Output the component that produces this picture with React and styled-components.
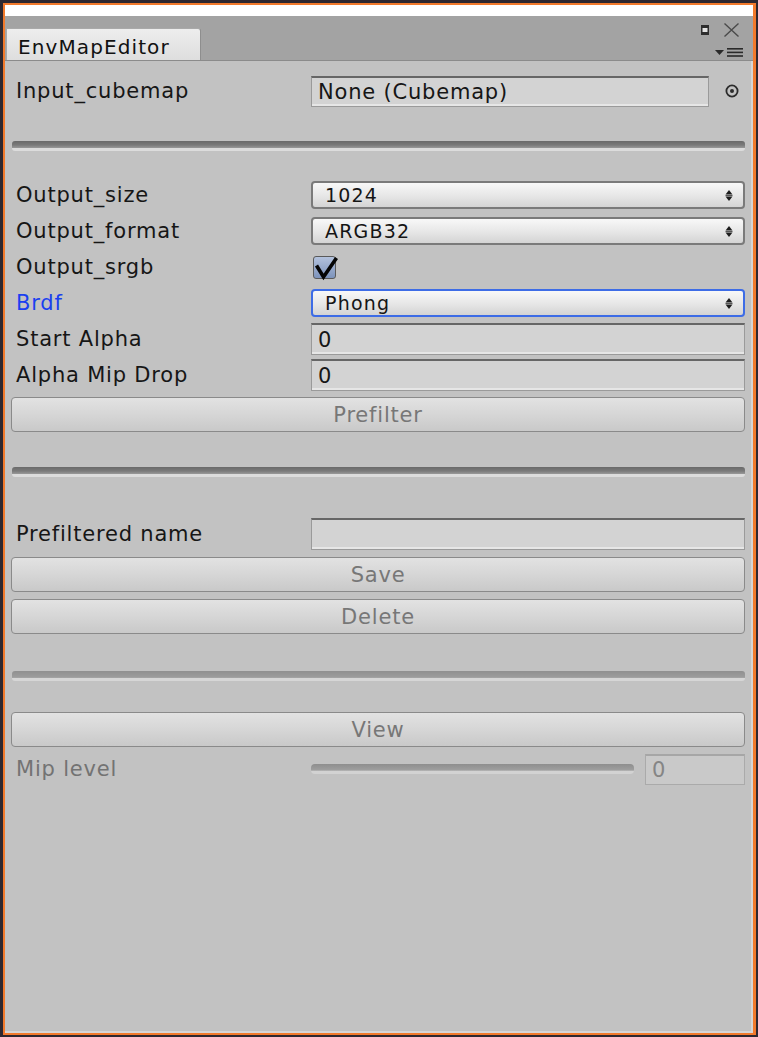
import React from 'react'
import styled, { createGlobalStyle } from 'styled-components'

const Global = createGlobalStyle`
  html, body {
    margin: 0;
    padding: 0;
    background: #2e2830;
  }
  body {
    font-family: "DejaVu Sans", "Liberation Sans", sans-serif;
  }
`

const Window = styled.div`
  margin: 3px 0 0 3px;
  width: 753px;
  height: 1032px;
  box-sizing: border-box;
  border: 2px solid #f27a2c;
  border-right-width: 3px;
  background: #c2c2c2;
  display: flex;
  flex-direction: column;
`

const TitleStrip = styled.div`
  height: 11px;
  background: #ffffff;
`

const TabBar = styled.div`
  height: 44px;
  background: #a3a3a3;
  border-bottom: 1px solid #8b8b8b;
  display: flex;
  align-items: flex-end;
`

const Tab = styled.div`
  margin-left: 1px;
  width: 195px;
  height: 32px;
  box-sizing: border-box;
  padding: 4px 0 0 11px;
  line-height: 28px;
  background: linear-gradient(#ededed, #dedede);
  border: 1px solid #a9a9a9;
  border-right-color: #8e8e8e;
  border-bottom: none;
  border-top-right-radius: 3px;
  font-size: 20px;
  letter-spacing: 1.1px;
  color: #111;
`

const WinControls = styled.div`
  margin-left: auto;
  align-self: stretch;
  display: flex;
  flex-direction: column;
  align-items: flex-end;
  padding: 6px 10px 0 0;
`

const TopIcons = styled.div`
  display: flex;
  align-items: center;
  gap: 14px;
  margin-right: 3px;
  height: 16px;
`

const MenuIcon = styled.div`
  margin-top: 10px;
  display: flex;
  align-items: center;
  gap: 3px;
`

const Content = styled.div`
  flex: 1;
  padding: 12px 6px 0 6px;
  border-right: 2px solid #d6d6d6;
  border-bottom: 2px solid #d6d6d6;
  display: flex;
  flex-direction: column;
`

const Row = styled.div`
  display: grid;
  grid-template-columns: 300px 1fr;
  align-items: center;
  height: 36px;
  margin-top: ${p => p.$mt || 0}px;
`

const Label = styled.div`
  padding-left: 5px;
  font-size: 21px;
  letter-spacing: 0.8px;
  color: ${p => p.$color || '#161616'};
  white-space: nowrap;
`

const Field = styled.div`
  height: ${p => p.$h || 32}px;
  width: ${p => (p.$w ? `${p.$w}px` : 'auto')};
  box-sizing: border-box;
  padding-left: 6px;
  background: ${p => (p.$disabled ? '#c9c9c9' : '#d3d3d3')};
  border: 1px solid ${p => (p.$disabled ? '#aaaaaa' : '#9a9a9a')};
  border-top: 2px solid ${p => (p.$disabled ? '#a6a6a6' : '#666666')};
  box-shadow: ${p => (p.$disabled ? 'none' : 'inset 0 -2px 0 #e6e6e6')};
  display: flex;
  align-items: center;
  font-size: 21px;
  letter-spacing: 0.8px;
  color: ${p => (p.$disabled ? '#858585' : '#161616')};
`

const PickerRow = styled.div`
  display: flex;
  align-items: center;
  gap: 16px;
`

const Dropdown = styled.div`
  height: 28px;
  box-sizing: border-box;
  padding: 0 10px 0 12px;
  border-radius: 4px;
  border: ${p => (p.$focus ? '2px solid #3d6ce6' : '2px solid #7a7a7a')};
  background: linear-gradient(#f8f8f8, #e6e6e6 55%, #d4d4d4);
  display: flex;
  align-items: center;
  justify-content: space-between;
  font-size: 19px;
  letter-spacing: 1.2px;
  color: #151515;
`

const CheckBox = styled.div`
  position: relative;
  margin-left: 2px;
  width: 23px;
  height: 23px;
  box-sizing: border-box;
  border: 1px solid #5a5a5a;
  border-radius: 3px;
  background: linear-gradient(#b3c2dd, #7d93bb);
`

const CheckMark = styled.svg`
  position: absolute;
  left: 1px;
  top: 0;
  overflow: visible;
`

const Separator = styled.div`
  height: 10px;
  margin: ${p => p.$mt}px 0 0 1px;
  border-radius: 3px;
  background: ${p =>
    p.$faint
      ? 'linear-gradient(#909090, #9b9b9b 55%, #a6a6a6 70%, #d6d6d6 72%, #d6d6d6)'
      : 'linear-gradient(#6a6a6a, #7a7a7a 40%, #999999 70%, #dcdcdc 72%, #dcdcdc)'};
`

const Button = styled.div`
  height: 35px;
  margin-top: ${p => p.$mt || 0}px;
  box-sizing: border-box;
  border: 1px solid #8a8a8a;
  border-radius: 4px;
  background: linear-gradient(#e2e2e2, #d6d6d6 50%, #c9c9c9);
  display: flex;
  align-items: center;
  justify-content: center;
  font-size: 21px;
  letter-spacing: 0.8px;
  color: #777777;
`

const SliderRow = styled.div`
  display: flex;
  align-items: center;
  gap: 11px;
`

const Track = styled.div`
  width: 323px;
  height: 10px;
  border-radius: 4px;
  background: linear-gradient(#8e8e8e, #9e9e9e 60%, #d2d2d2 75%, #d2d2d2);
`

const ArrowIcon = () => (
  <svg width="8" height="13" viewBox="0 0 8 13">
    <path d="M0.5 5.5 L4 1 L7.5 5.5 Z" fill="#1c1c1c" />
    <rect x="0.5" y="6" width="7" height="1" fill="#555" />
    <path d="M0.5 7.5 L4 12 L7.5 7.5 Z" fill="#1c1c1c" />
  </svg>
)

const PickerIcon = () => (
  <svg width="14" height="14" viewBox="0 0 14 14">
    <circle cx="7" cy="7" r="5.6" fill="none" stroke="#2b2b2b" strokeWidth="1.8" />
    <circle cx="7" cy="7" r="2" fill="#2b2b2b" />
  </svg>
)

const Select = ({ value, focus }) => (
  <Dropdown $focus={focus}>
    <span>{value}</span>
    <ArrowIcon />
  </Dropdown>
)

export default function App() {
  return (
    <>
      <Global />
      <Window>
        <TitleStrip />
        <TabBar>
          <Tab>EnvMapEditor</Tab>
          <WinControls>
            <TopIcons>
              <svg width="8" height="10" viewBox="0 0 8 10">
                <rect x="0" y="0" width="8" height="10" fill="#2e2e2e" />
                <rect x="1.5" y="3" width="5" height="4" fill="#e4e4e4" />
              </svg>
              <svg width="17" height="16" viewBox="0 0 17 16">
                <path d="M1.5 1.5 L15.5 14.5 M15.5 1.5 L1.5 14.5" stroke="#4a4a4a" strokeWidth="1.4" />
              </svg>
            </TopIcons>
            <MenuIcon>
              <svg width="9" height="5" viewBox="0 0 9 5">
                <path d="M0 0 H9 L4.5 5 Z" fill="#2a2a2a" />
              </svg>
              <svg width="16" height="9" viewBox="0 0 16 9">
                <rect x="0" y="0" width="16" height="1.6" fill="#2a2a2a" />
                <rect x="0" y="3.6" width="16" height="1.6" fill="#2a2a2a" />
                <rect x="0" y="7.2" width="16" height="1.6" fill="#2a2a2a" />
              </svg>
            </MenuIcon>
          </WinControls>
        </TabBar>

        <Content>
          <Row>
            <Label>Input_cubemap</Label>
            <PickerRow>
              <Field $w={398} $h={31}>None (Cubemap)</Field>
              <PickerIcon />
            </PickerRow>
          </Row>

          <Separator $mt={32} />

          <Row $mt={26}>
            <Label>Output_size</Label>
            <Select value="1024" />
          </Row>
          <Row>
            <Label>Output_format</Label>
            <Select value="ARGB32" />
          </Row>
          <Row>
            <Label>Output_srgb</Label>
            <CheckBox>
              <CheckMark width="24" height="24" viewBox="0 0 24 24">
                <path d="M1.5 8.5 L8.5 20 L21.5 1" fill="none" stroke="#050505" strokeWidth="3.6" strokeLinejoin="miter" />
              </CheckMark>
            </CheckBox>
          </Row>
          <Row>
            <Label $color="#1a3ff0">Brdf</Label>
            <Select value="Phong" focus />
          </Row>
          <Row>
            <Label>Start Alpha</Label>
            <Field>0</Field>
          </Row>
          <Row>
            <Label>Alpha Mip Drop</Label>
            <Field>0</Field>
          </Row>
          <Button $mt={4}>Prefilter</Button>

          <Separator $mt={35} />

          <Row $mt={39}>
            <Label>Prefiltered name</Label>
            <Field />
          </Row>
          <Button $mt={5}>Save</Button>
          <Button $mt={7}>Delete</Button>

          <Separator $mt={37} $faint />

          <Button $mt={31}>View</Button>
          <Row $mt={4}>
            <Label $color="#737373">Mip level</Label>
            <SliderRow>
              <Track />
              <Field $w={100} $h={31} $disabled>0</Field>
            </SliderRow>
          </Row>
        </Content>
      </Window>
    </>
  )
}
